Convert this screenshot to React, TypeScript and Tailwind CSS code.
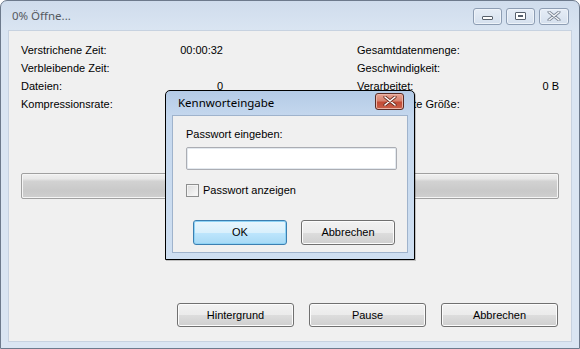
import React from "react";

const font = { fontFamily: '"Liberation Sans", Arial, sans-serif' };
const titleFont = { fontFamily: '"Noto Sans", "Open Sans", sans-serif' };

function W7Button({ label, primary, className }: { label: string; primary?: boolean; className?: string }) {
  return (
    <div
      className={
        "relative flex items-center justify-center rounded-[3px] border text-[11px] text-black " +
        (primary
          ? "border-[#3c7fb1] bg-[linear-gradient(#eaf6fd_0%,#d9f0fc_50%,#bee6fd_50%,#a7d9f5_100%)] shadow-[inset_0_0_0_1px_#8fd3f5]"
          : "border-[#707070] bg-[linear-gradient(#f2f2f2_0%,#ebebeb_50%,#dddddd_50%,#cfcfcf_100%)] shadow-[inset_0_0_0_1px_#fcfcfc]") +
        " " +
        (className ?? "")
      }
    >
      {label}
    </div>
  );
}

function CaptionBtn({ children, w = "w-[29px]" }: { children: React.ReactNode; w?: string }) {
  return (
    <div
      className={
        w +
        " h-[17px] rounded-[3px] border border-[#8d9db3] bg-[linear-gradient(#e6edf6,#d5e0ee)] shadow-[inset_0_0_0_1px_#eef3f9] flex items-center justify-center"
      }
    >
      {children}
    </div>
  );
}

export default function App() {
  return (
    <div className="w-[580px] h-[349px] overflow-hidden bg-white" style={font}>
      <div className="relative w-[580px] h-[349px] rounded-t-[7px] border border-[#6d7a8c] bg-[linear-gradient(#cfdcec,#dae5f2_30px,#dae5f2)] flex flex-col">
        {/* title bar */}
        <div className="h-[29px] flex items-center pl-[11px] pr-[10px]">
          <div className="text-[11.5px] text-[#55595f]" style={titleFont}>
            0% Öffne...
          </div>
          <div className="ml-auto flex gap-[4px] mt-[1px]">
            <CaptionBtn>
              <div className="w-[11px] h-[4px] border border-[#57606c] bg-white rounded-[1px] mt-[3px]" />
            </CaptionBtn>
            <CaptionBtn>
              <div className="w-[11px] h-[8px] border border-[#57606c] bg-white rounded-[1px] flex items-center justify-center">
                <div className="w-[5px] h-[2px] border border-[#57606c]" />
              </div>
            </CaptionBtn>
            <CaptionBtn w="w-[30px]">
              <svg width="14" height="10" viewBox="0 0 14 10">
                <path d="M2 1 L12 9 M12 1 L2 9" stroke="#7a8594" strokeWidth="3" strokeLinecap="round" />
                <path d="M2 1 L12 9 M12 1 L2 9" stroke="#f4f6f9" strokeWidth="1.4" strokeLinecap="round" />
              </svg>
            </CaptionBtn>
          </div>
        </div>
        {/* content */}
        <div className="mx-[7px] flex-1 border border-[#c7d2e0] bg-[#f0f0f0] flex flex-col pl-[12px] pr-[12px] pt-[10px]">
          <div className="flex justify-between text-[11px] text-black">
            <div className="w-[202px] flex flex-col">
              <div className="h-[18px] flex items-center justify-between">
                <span>Verstrichene Zeit:</span>
                <span>00:00:32</span>
              </div>
              <div className="h-[18px] flex items-center">
                <span>Verbleibende Zeit:</span>
              </div>
              <div className="h-[18px] flex items-center justify-between">
                <span>Dateien:</span>
                <span>0</span>
              </div>
              <div className="h-[18px] flex items-center">
                <span>Kompressionsrate:</span>
              </div>
            </div>
            <div className="w-[202px] flex flex-col">
              <div className="h-[18px] flex items-center">
                <span>Gesamtdatenmenge:</span>
              </div>
              <div className="h-[18px] flex items-center">
                <span>Geschwindigkeit:</span>
              </div>
              <div className="h-[18px] flex items-center justify-between">
                <span>Verarbeitet:</span>
                <span>0 B</span>
              </div>
              <div className="h-[18px] flex items-center">
                <span>Komprimierte Größe:</span>
              </div>
            </div>
          </div>
          {/* progress bar */}
          <div className="mt-[60px] h-[26px] rounded-[2px] border border-[#a0a0a0] bg-[linear-gradient(#f0f0f0_0%,#e8e8e8_20%,#d2d2d2_30%,#c9c9c9_70%,#cfcfcf_100%)] shadow-[inset_0_0_0_1px_#f5f5f5]" />
          {/* bottom buttons */}
          <div className="mt-auto mb-[14px] flex justify-end gap-[15px] pr-[1px]">
            <W7Button label="Hintergrund" className="w-[117px] h-[24px]" />
            <W7Button label="Pause" className="w-[117px] h-[24px]" />
            <W7Button label="Abbrechen" className="w-[117px] h-[24px]" />
          </div>
        </div>
        <div className="h-[6px]" />

        {/* dialog */}
        <div className="absolute left-[164px] top-[89px] w-[250px] h-[170px] rounded-t-[5px] border border-black bg-[linear-gradient(#b4cbe6,#c5d8ee_26px,#cfdff1)] flex flex-col shadow-[1px_1px_0_#0003]">
          <div className="h-[24px] flex items-center pl-[12px] pr-[10px]">
            <span className="text-[11.5px] text-black" style={titleFont}>
              Kennworteingabe
            </span>
            <div className="ml-auto mt-[-4px] w-[29px] h-[17px] rounded-[3px] border border-[#5a2c25] bg-[linear-gradient(#e8a493_0%,#d7826f_45%,#c24b36_55%,#c9604a_100%)] shadow-[inset_0_0_0_1px_#ebb3a6] flex items-center justify-center">
              <svg width="14" height="10" viewBox="0 0 14 10">
                <path d="M2 1 L12 9 M12 1 L2 9" stroke="#6b2d22" strokeWidth="3.2" strokeLinecap="round" />
                <path d="M2 1 L12 9 M12 1 L2 9" stroke="#ffffff" strokeWidth="1.6" strokeLinecap="round" />
              </svg>
            </div>
          </div>
          <div className="mx-[6px] mb-[6px] flex-1 border border-[#9fb3cc] bg-[#f0f0f0] flex flex-col pl-[13px] pr-[11px] pt-[11px] text-[11px] text-black">
            <div className="h-[14px] flex items-center">Passwort eingeben:</div>
            <div className="mt-[6px] h-[23px] w-[211px] rounded-[2px] border border-[#abadb3] bg-white shadow-[inset_0_0_0_1px_#e3e9ef]" />
            <div className="mt-[12px] flex items-center gap-[4px]">
              <div className="w-[13px] h-[13px] border border-[#8e8f8f] bg-[linear-gradient(135deg,#dcdcdc,#fbfbfb)] shadow-[inset_0_0_0_1px_#f4f4f4]" />
              <span>Passwort anzeigen</span>
            </div>
            <div className="mt-[21px] flex gap-[14px] pl-[7px]">
              <W7Button label="OK" primary className="w-[94px] h-[25px]" />
              <W7Button label="Abbrechen" className="w-[94px] h-[25px]" />
            </div>
          </div>
        </div>
      </div>
    </div>
  );
}
